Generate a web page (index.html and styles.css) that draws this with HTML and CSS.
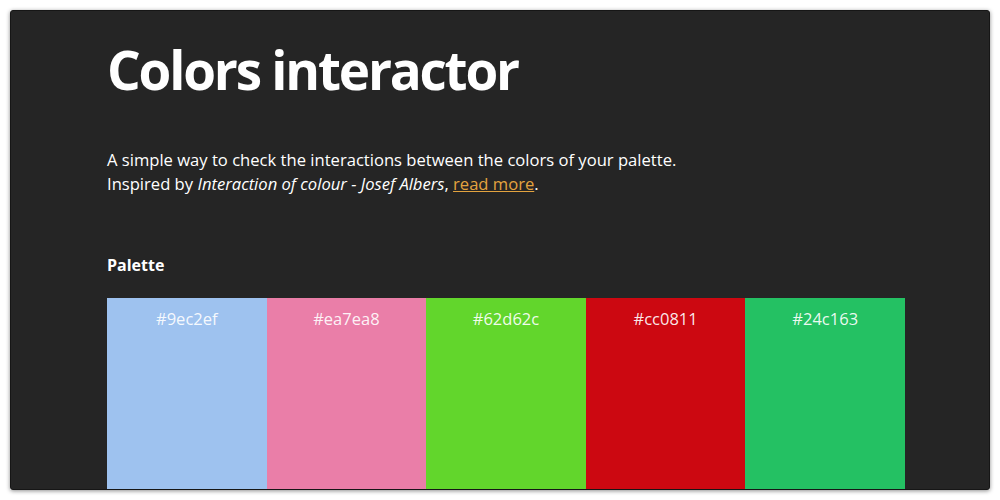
FILE: index.html
```html
<!DOCTYPE html>
<html lang="en">
<head>
<meta charset="utf-8">
<title>Colors interactor</title>
<link rel="stylesheet" href="styles.css">
</head>
<body>
<div class="window">
  <main class="content">
    <h1 class="title">Colors interactor</h1>
    <p class="intro">A simple way to check the interactions between the colors of your palette.<br>Inspired by <em>Interaction of colour - Josef Albers</em>, <a href="#" class="link">read more</a>.</p>
    <h2 class="label">Palette</h2>
    <div class="palette">
      <div class="swatch" style="background:#9ec2ef">#9ec2ef</div>
      <div class="swatch" style="background:#ea7ea8">#ea7ea8</div>
      <div class="swatch" style="background:#62d62c">#62d62c</div>
      <div class="swatch" style="background:#cc0811">#cc0811</div>
      <div class="swatch" style="background:#24c163">#24c163</div>
    </div>
  </main>
</div>
</body>
</html>
```
FILE: styles.css
```css
html, body {
  margin: 0;
  padding: 0;
  background: #ffffff;
}
.window {
  margin: 10px;
  height: 480px;
  box-sizing: border-box;
  background: #252525;
  border: 1px solid #161616;
  border-radius: 3px;
  box-shadow: 0 1px 4px rgba(0,0,0,0.45);
  overflow: hidden;
  font-family: "Open Sans", "Noto Sans", sans-serif;
  color: #ffffff;
}
.content {
  width: 798px;
  padding-left: 96px;
}
.title {
  margin: 22px 0 0;
  font-size: 53px;
  font-weight: 700;
  line-height: 74px;
  letter-spacing: -2.2px;
}
.intro {
  margin: 41px 0 0;
  font-size: 16.6px;
  line-height: 24px;
}
.link {
  color: #e3a33f;
}
.label {
  margin: 57px 0 0;
  font-size: 16px;
  font-weight: 700;
  line-height: 24px;
}
.palette {
  margin-top: 21px;
  display: grid;
  grid-template-columns: repeat(5, 1fr);
  height: 200px;
}
.swatch {
  text-align: center;
  padding-top: 9px;
  font-size: 16.5px;
  line-height: 24px;
  color: rgba(255,255,255,0.92);
}
```
